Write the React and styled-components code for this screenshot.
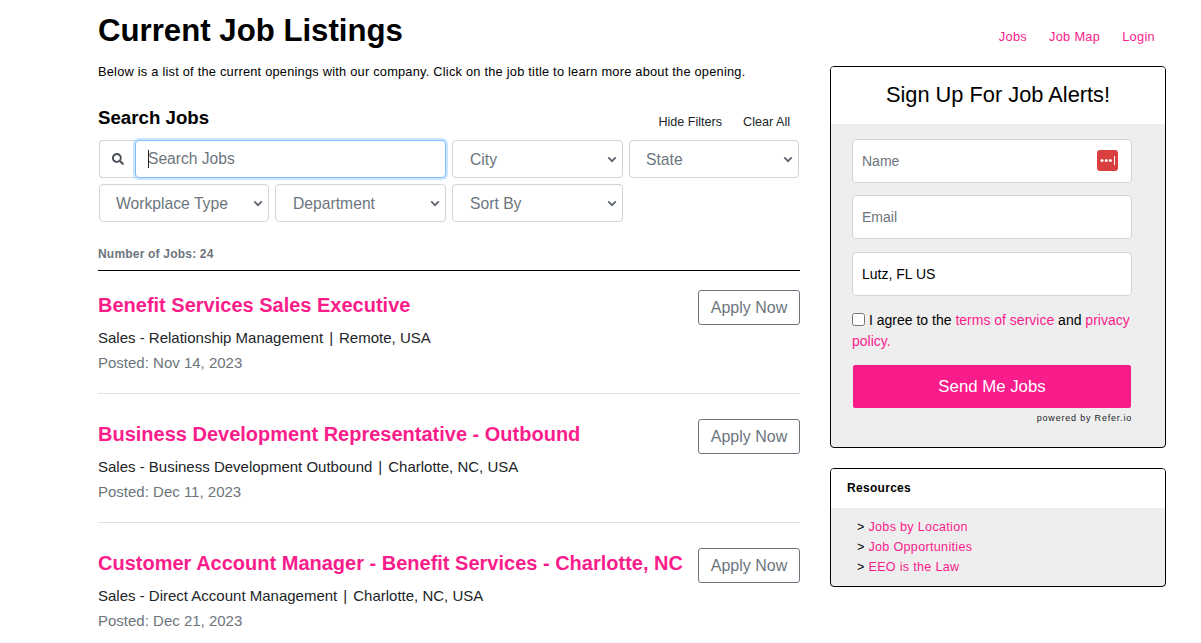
import React from 'react';
import styled, { createGlobalStyle } from 'styled-components';
import { FaSearch } from 'react-icons/fa';

const PINK = '#fb1c8c';
const CHEVRON = `url("data:image/svg+xml,%3csvg xmlns='http://www.w3.org/2000/svg' viewBox='0 0 12 8'%3e%3cpath fill='none' stroke='%235f666d' stroke-width='2.2' d='M1.5 1.5L6 6l4.5-4.5'/%3e%3c/svg%3e")`;

const GlobalStyle = createGlobalStyle`
  * { box-sizing: border-box; }
  html, body { margin: 0; height: 100%; overflow: hidden; background: #fff; }
  body { font-family: "Liberation Sans", Arial, sans-serif; color: #000; }
`;

const Page = styled.div`
  display: flex;
  align-items: flex-start;
  gap: 30px;
  padding-left: 98px;
  width: 1201px;
`;

const Main = styled.main`
  width: 702px;
  flex: none;
`;

const Title = styled.h1`
  margin: 0;
  padding-top: 12px;
  font-size: 31.2px;
  line-height: 37px;
  font-weight: 700;
`;

const Intro = styled.p`
  margin: 15px 0 0;
  font-size: 12.8px;
  line-height: 15px;
  letter-spacing: 0.23px;
`;

const SearchHead = styled.div`
  display: flex;
  justify-content: space-between;
  align-items: flex-end;
  margin-top: 28px;
  height: 21px;
`;

const SearchTitle = styled.h2`
  margin: 0;
  font-size: 18.7px;
  line-height: 21px;
  font-weight: 700;
`;

const FilterLinks = styled.div`
  display: flex;
  gap: 21px;
  padding-right: 10px;
  font-size: 12.6px;
  line-height: 14px;
  color: #212529;
  margin-bottom: -1px;
`;

const FilterRow = styled.div`
  display: flex;
  gap: 6px;
  margin-top: ${(p) => (p.$first ? '12px' : '6px')};
  padding-left: 1px;
`;

const SearchGroup = styled.div`
  position: relative;
  display: flex;
  width: 347px;
  height: 38px;
`;

const SearchAddon = styled.span`
  display: flex;
  align-items: center;
  justify-content: center;
  width: 36px;
  flex: none;
  color: #495057;
  font-size: 12px;
  border: 1px solid #ced4da;
  border-right: none;
  border-radius: 4px 0 0 4px;
`;

const SearchInput = styled.input`
  flex: 1;
  min-width: 0;
  height: 38px;
  padding: 0 12px;
  font: 15.6px "Liberation Sans", Arial, sans-serif;
  color: #495057;
  border: 1px solid #80bdff;
  border-radius: 4px;
  outline: none;
  box-shadow: 0 0 0 2px rgba(0, 123, 255, 0.2);
  &::placeholder { color: #6c757d; opacity: 1; }
`;

const Caret = styled.span`
  position: absolute;
  left: 49px;
  top: 10px;
  width: 1px;
  height: 18px;
  background: #212529;
`;

const Select = styled.select`
  appearance: none;
  width: ${(p) => p.$w}px;
  height: 38px;
  padding: 0 24px 0 ${(p) => (p.$w === 170 ? 16 : 17)}px;
  font: 15.7px "Liberation Sans", Arial, sans-serif;
  color: #6c757d;
  background: #fff ${CHEVRON} no-repeat right 5px center / 10px 7px;
  border: 1px solid #ced4da;
  border-radius: 4px;
`;

const JobCount = styled.div`
  margin-top: 25px;
  font-size: 12px;
  line-height: 14px;
  font-weight: 700;
  color: #6c757d;
  letter-spacing: 0.2px;
`;

const JobList = styled.div`
  margin-top: 9px;
  border-top: 1px solid #000;
`;

const JobItem = styled.article`
  display: flex;
  justify-content: space-between;
  align-items: flex-start;
  height: 129px;
  padding-top: 25px;
  border-bottom: 1px solid #dee2e6;
  &:first-child {
    height: 123px;
    padding-top: 19px;
  }
`;

const JobTitle = styled.a`
  display: block;
  margin-top: 4px;
  font-size: 20px;
  line-height: 23px;
  font-weight: 700;
  color: ${PINK};
`;

const JobMeta = styled.div`
  margin-top: 10px;
  font-size: 15px;
  line-height: 21px;
  color: #212529;
`;

const Separator = styled.span`
  margin: 0 6px;
`;

const JobDate = styled.div`
  margin-top: 4px;
  font-size: 15px;
  line-height: 21px;
  color: #6c757d;
`;

const ApplyButton = styled.button`
  flex: none;
  width: 102px;
  height: 35px;
  padding: 0;
  font: 16px "Liberation Sans", Arial, sans-serif;
  color: #6c757d;
  background: #fff;
  border: 1px solid #6c757d;
  border-radius: 3px;
`;

const Side = styled.aside`
  width: 336px;
  flex: none;
`;

const Nav = styled.nav`
  display: flex;
  justify-content: flex-end;
  gap: 22px;
  height: 66px;
  padding: 30px 11px 0 0;
  font-size: 12.8px;
  line-height: 14px;
  letter-spacing: 0.3px;
  color: ${PINK};
`;

const Card = styled.section`
  border: 1px solid #000;
  border-radius: 4px;
  overflow: hidden;
  background: #eee;
  & + & { margin-top: 20px; }
`;

const CardHead = styled.div`
  background: #fff;
`;

const AlertsTitle = styled.h3`
  margin: 0;
  height: 57px;
  padding-top: 14px;
  font-size: 21.8px;
  line-height: 27px;
  font-weight: 400;
  text-align: center;
`;

const AlertsBody = styled.form`
  padding: 15px 33px 0 21px;
  height: 323px;
`;

const FieldWrap = styled.div`
  position: relative;
  margin-bottom: ${(p) => p.$mb}px;
`;

const Field = styled.input`
  display: block;
  width: 100%;
  height: 44px;
  padding: 0 9px;
  font: 14px "Liberation Sans", Arial, sans-serif;
  color: #000;
  background: #fff;
  border: 1px solid #ced4da;
  border-radius: 4px;
  &::placeholder { color: #6c757d; opacity: 1; }
`;

const PassBadge = styled.svg`
  position: absolute;
  right: 14px;
  top: 11px;
`;

const Agree = styled.div`
  margin-top: 14px;
  font-size: 14px;
  line-height: 21px;
`;

const Check = styled.input`
  width: 13px;
  height: 13px;
  margin: 0 4px 0 0;
  vertical-align: -1px;
`;

const Pink = styled.a`
  color: ${PINK};
`;

const SendButton = styled.button`
  display: block;
  width: 278px;
  height: 43px;
  margin: 13px 0 0 1px;
  padding: 0;
  font: 16.8px "Liberation Sans", Arial, sans-serif;
  color: #fff;
  background: ${PINK};
  border: none;
  border-radius: 2px;
`;

const Powered = styled.div`
  margin-top: 4px;
  font-size: 9px;
  line-height: 12px;
  letter-spacing: 0.8px;
  text-align: right;
  color: #212529;
`;

const ResourcesTitle = styled.h4`
  margin: 0;
  height: 39px;
  padding: 12px 16px 0;
  font-size: 12px;
  line-height: 15px;
  font-weight: 700;
  letter-spacing: 0.3px;
`;

const ResourceList = styled.ul`
  list-style: none;
  margin: 0;
  padding: 9px 26px 9px;
  font-size: 12.6px;
  line-height: 20px;
  letter-spacing: 0.3px;
`;

const jobs = [
  { title: 'Benefit Services Sales Executive', dept: 'Sales - Relationship Management', place: 'Remote, USA', date: 'Nov 14, 2023' },
  { title: 'Business Development Representative - Outbound', dept: 'Sales - Business Development Outbound', place: 'Charlotte, NC, USA', date: 'Dec 11, 2023' },
  { title: 'Customer Account Manager - Benefit Services - Charlotte, NC', dept: 'Sales - Direct Account Management', place: 'Charlotte, NC, USA', date: 'Dec 21, 2023' },
];

const App = () => {
  return (
    <Page>
      <GlobalStyle />
      <Main>
        <Title>Current Job Listings</Title>
        <Intro>Below is a list of the current openings with our company. Click on the job title to learn more about the opening.</Intro>
        <SearchHead>
          <SearchTitle>Search Jobs</SearchTitle>
          <FilterLinks>
            <span>Hide Filters</span>
            <span>Clear All</span>
          </FilterLinks>
        </SearchHead>
        <FilterRow $first>
          <SearchGroup>
            <SearchAddon><FaSearch /></SearchAddon>
            <SearchInput placeholder="Search Jobs" />
            <Caret />
          </SearchGroup>
          <Select $w={171}><option>City</option></Select>
          <Select $w={170}><option>State</option></Select>
        </FilterRow>
        <FilterRow>
          <Select $w={170}><option>Workplace Type</option></Select>
          <Select $w={171}><option>Department</option></Select>
          <Select $w={171}><option>Sort By</option></Select>
        </FilterRow>
        <JobCount>Number of Jobs: 24</JobCount>
        <JobList>
          {jobs.map((job) => (
            <JobItem key={job.title}>
              <div>
                <JobTitle>{job.title}</JobTitle>
                <JobMeta>{job.dept}<Separator>|</Separator>{job.place}</JobMeta>
                <JobDate>Posted: {job.date}</JobDate>
              </div>
              <ApplyButton>Apply Now</ApplyButton>
            </JobItem>
          ))}
        </JobList>
      </Main>
      <Side>
        <Nav>
          <span>Jobs</span>
          <span>Job Map</span>
          <span>Login</span>
        </Nav>
        <Card>
          <CardHead><AlertsTitle>Sign Up For Job Alerts!</AlertsTitle></CardHead>
          <AlertsBody>
            <FieldWrap $mb={12}>
              <Field placeholder="Name" />
              <PassBadge width="21" height="21" viewBox="0 0 21 21">
                <rect width="21" height="21" rx="3" fill="#d93f3f" />
                <circle cx="5" cy="10.5" r="1.5" fill="#fff" />
                <circle cx="9.2" cy="10.5" r="1.5" fill="#fff" />
                <circle cx="13.4" cy="10.5" r="1.5" fill="#fff" />
                <rect x="17" y="6" width="1" height="9" fill="#fff" />
              </PassBadge>
            </FieldWrap>
            <FieldWrap $mb={13}><Field placeholder="Email" /></FieldWrap>
            <FieldWrap $mb={0}><Field defaultValue="Lutz, FL US" /></FieldWrap>
            <Agree>
              <Check type="checkbox" />I agree to the <Pink>terms of service</Pink> and <Pink>privacy policy.</Pink>
            </Agree>
            <SendButton type="button">Send Me Jobs</SendButton>
            <Powered>powered by Refer.io</Powered>
          </AlertsBody>
        </Card>
        <Card>
          <CardHead><ResourcesTitle>Resources</ResourcesTitle></CardHead>
          <ResourceList>
            <li>&gt; <Pink>Jobs by Location</Pink></li>
            <li>&gt; <Pink>Job Opportunities</Pink></li>
            <li>&gt; <Pink>EEO is the Law</Pink></li>
          </ResourceList>
        </Card>
      </Side>
    </Page>
  );
};

export default App;
